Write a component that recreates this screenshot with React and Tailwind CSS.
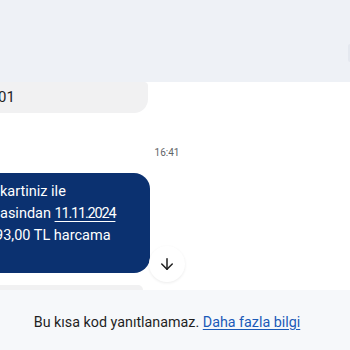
import React from 'react';
import { ArrowDown } from 'lucide-react';

function App() {
  return (
    <div className="w-[350px] h-[350px] bg-white overflow-hidden flex flex-col font-['Roboto',sans-serif] text-[#1f1f1f]">
      {/* top panel */}
      <div className="h-[82px] shrink-0 bg-[#eef1f6] relative">
        <div className="absolute right-0 top-[44px] w-[2px] h-[18px] rounded-l bg-[#e4e8ef]" />
      </div>

      {/* incoming grey bubble */}
      <div className="w-[148px] h-[31px] bg-[#f1f1f2] rounded-br-[14px] rounded-tr-[4px] flex items-center">
        <span className="text-[15px] ml-[-2px]">01</span>
      </div>

      <div className="h-[45px] flex items-end justify-center pr-[16px]">
        <span className="text-[10px] text-[#5f6368] leading-none">16:41</span>
      </div>

      {/* blue bubble */}
      <div className="mt-[15px] flex items-end">
        <div className="w-[150px] h-[100px] bg-[#0b3170] rounded-r-[16px] text-white text-[14.5px] leading-[22px] pt-[8px] overflow-hidden whitespace-nowrap">
          <div>kartiniz ile</div>
          <div>
            asindan <span className="underline underline-offset-[3px] tracking-[-1.2px]">11.11.2024</span>
          </div>
          <div className="ml-[-5px]">93,00 TL harcama</div>
        </div>
        <div className="ml-[-1px] mb-[-9px] w-[36px] h-[36px] rounded-full bg-white shadow-[0_1px_3px_rgba(0,0,0,0.08)] flex items-center justify-center">
          <ArrowDown size={18} strokeWidth={2} color="#1f1f1f" />
        </div>
      </div>

      {/* next bubble peeking */}
      <div className="mt-[12px] w-[143px] h-[5px] shrink-0 bg-[#f1f1f2] rounded-tr-[12px]" />

      {/* bottom notice */}
      <div className="flex-1 bg-[#f6f8fa] flex items-start justify-center pt-[22px] pr-[16px]">
        <p className="text-[14.3px] text-[#1f1f1f]">
          Bu kısa kod yanıtlanamaz.{' '}
          <span className="text-[#1a5ab8] underline underline-offset-[2px]">Daha fazla bilgi</span>
        </p>
      </div>
    </div>
  );
}

export default App;
